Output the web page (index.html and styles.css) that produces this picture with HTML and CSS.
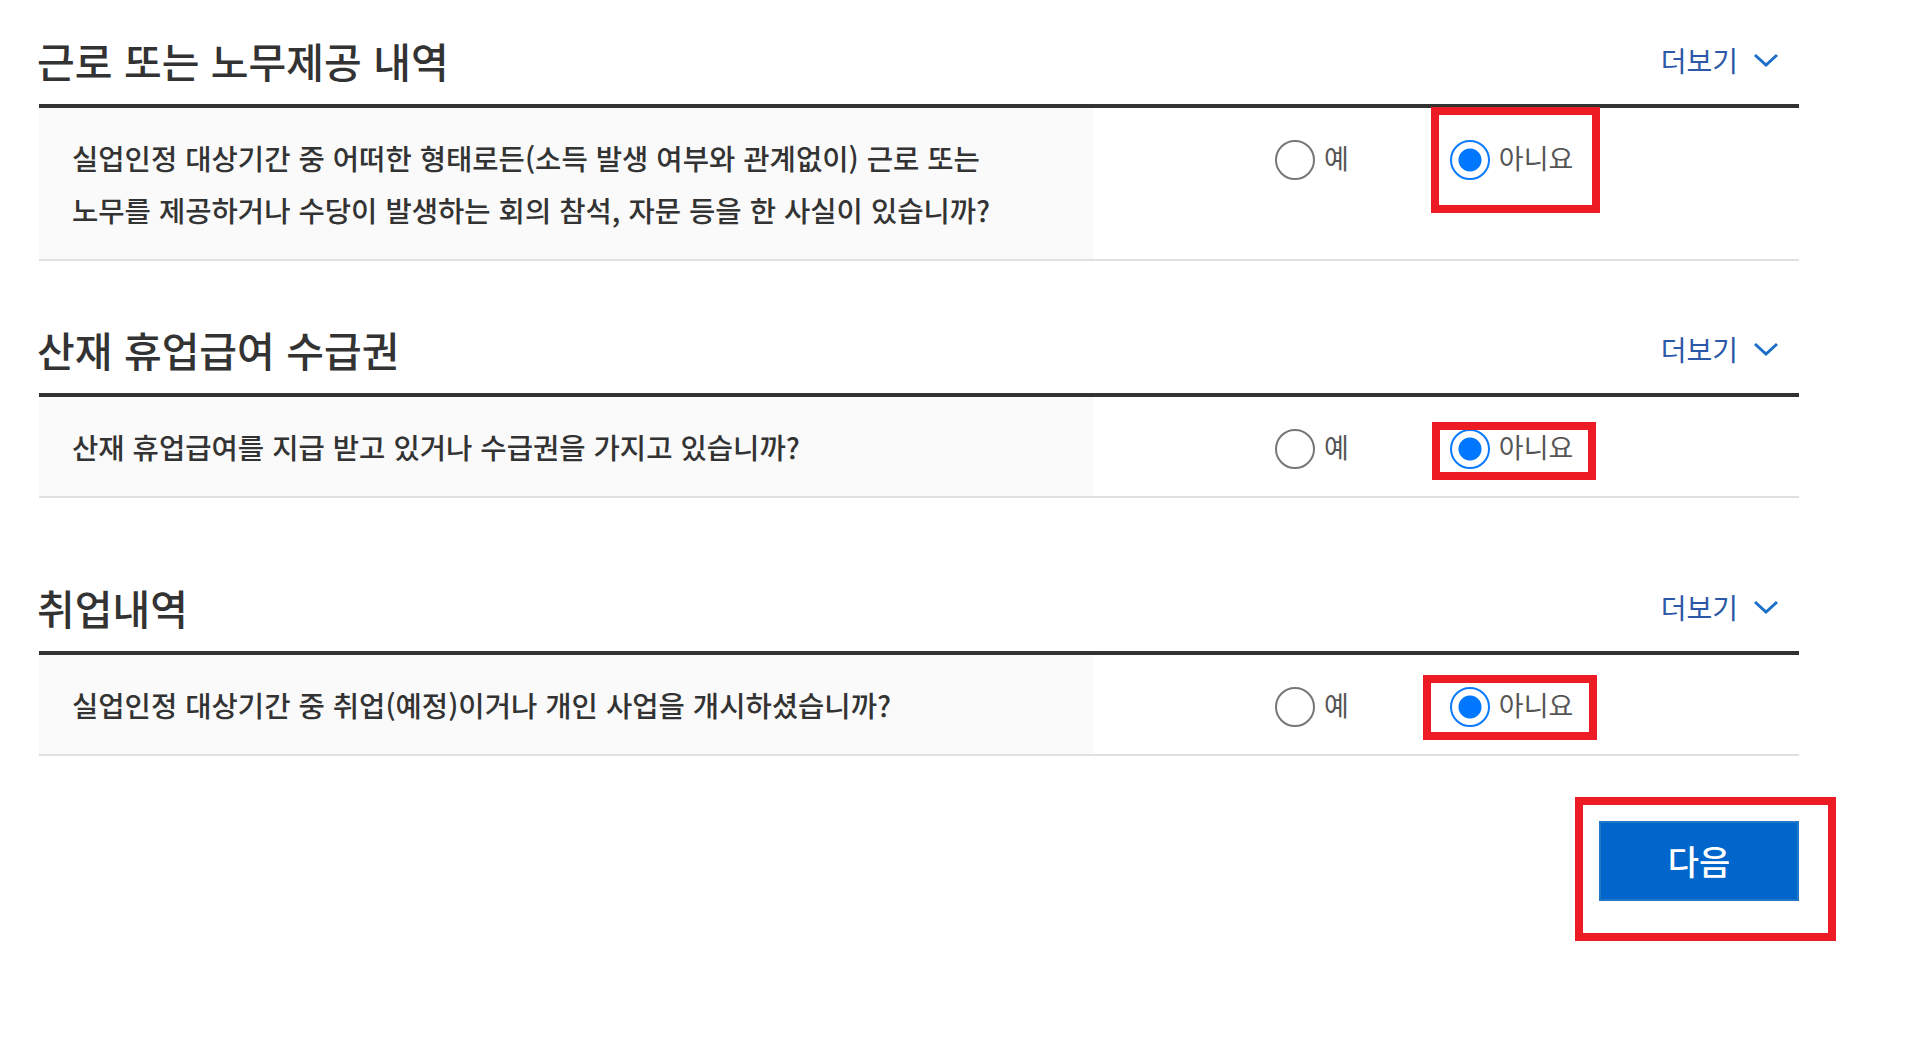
FILE: index.html
```html
<!DOCTYPE html>
<html lang="ko">
<head>
<meta charset="utf-8">
<title>실업인정 신청</title>
<link rel="stylesheet" href="styles.css">
</head>
<body>
<main class="page">
  <section class="sect">
    <div class="sect-head">
      <h2 class="sect-title">근로 또는 노무제공 내역</h2>
      <a class="more" href="#">더보기<svg class="chev" width="26" height="14" viewBox="0 0 26 14"><path d="M2 2 L13 12 L24 2" fill="none" stroke="currentColor" stroke-width="3"/></svg></a>
    </div>
    <div class="qtable">
      <div class="qrow">
        <div class="qtext">실업인정 대상기간 중 어떠한 형태로든(소득 발생 여부와 관계없이) 근로 또는<br>노무를 제공하거나 수당이 발생하는 회의 참석, 자문 등을 한 사실이 있습니까?</div>
        <div class="qopts">
          <label class="opt"><span class="radio"></span><span class="opt-label">예</span></label>
          <label class="opt"><span class="radio is-checked"></span><span class="opt-label">아니요</span></label>
          <span class="mark mark-1"></span>
        </div>
      </div>
    </div>
  </section>

  <section class="sect">
    <div class="sect-head">
      <h2 class="sect-title">산재 휴업급여 수급권</h2>
      <a class="more" href="#">더보기<svg class="chev" width="26" height="14" viewBox="0 0 26 14"><path d="M2 2 L13 12 L24 2" fill="none" stroke="currentColor" stroke-width="3"/></svg></a>
    </div>
    <div class="qtable">
      <div class="qrow">
        <div class="qtext">산재 휴업급여를 지급 받고 있거나 수급권을 가지고 있습니까?</div>
        <div class="qopts">
          <label class="opt"><span class="radio"></span><span class="opt-label">예</span></label>
          <label class="opt"><span class="radio is-checked"></span><span class="opt-label">아니요</span></label>
          <span class="mark mark-2"></span>
        </div>
      </div>
    </div>
  </section>

  <section class="sect sect-last">
    <div class="sect-head">
      <h2 class="sect-title">취업내역</h2>
      <a class="more" href="#">더보기<svg class="chev" width="26" height="14" viewBox="0 0 26 14"><path d="M2 2 L13 12 L24 2" fill="none" stroke="currentColor" stroke-width="3"/></svg></a>
    </div>
    <div class="qtable">
      <div class="qrow">
        <div class="qtext">실업인정 대상기간 중 취업(예정)이거나 개인 사업을 개시하셨습니까?</div>
        <div class="qopts">
          <label class="opt"><span class="radio"></span><span class="opt-label">예</span></label>
          <label class="opt"><span class="radio is-checked"></span><span class="opt-label">아니요</span></label>
          <span class="mark mark-3"></span>
        </div>
      </div>
    </div>
  </section>

  <div class="actions">
    <div class="btn-wrap">
      <button class="btn-next" type="button">다음</button>
      <span class="mark mark-4"></span>
    </div>
  </div>
</main>
</body>
</html>
```

FILE: styles.css
```css
* { box-sizing: border-box; }

html, body {
  margin: 0;
  padding: 0;
  background: #ffffff;
}

body {
  font-family: "Noto Sans CJK KR", "Noto Sans KR", sans-serif;
  color: #333333;
}

.page {
  width: 1799px;
  padding: 30px 0 100px 39px;
}

.sect + .sect {
  margin-top: 58px;
}

.sect.sect-last {
  margin-top: 79px;
}

.sect-head {
  height: 60px;
  margin-bottom: 14px;
  display: flex;
  align-items: center;
  justify-content: space-between;
}

.sect-title {
  margin: 0 0 0 -2px;
  font-size: 41px;
  line-height: 60px;
  font-weight: 500;
  color: #333333;
}

.more {
  display: flex;
  align-items: center;
  gap: 15px;
  margin-right: 20px;
  font-size: 28px;
  line-height: 40px;
  color: #2c58a8;
  text-decoration: none;
}

.chev {
  display: block;
  color: #1c6fc8;
}

.qtable {
  border-top: 4px solid #333333;
}

.qrow {
  display: flex;
  align-items: flex-start;
  border-bottom: 2px solid #e0e0e0;
}

.qtext {
  width: 1055px;
  flex: none;
  align-self: stretch;
  background: #fafafa;
  padding: 24px 20px 23px 33px;
  font-size: 28.6px;
  line-height: 52px;
  font-weight: 500;
  color: #333333;
}

.qopts {
  position: relative;
  flex: 1;
  display: flex;
  gap: 101px;
  padding: 32px 0 0 181px;
}

.opt {
  display: flex;
  align-items: center;
  gap: 9px;
  cursor: pointer;
}

.radio {
  display: block;
  width: 40px;
  height: 40px;
  border-radius: 50%;
  border: 2px solid #777777;
  background: #ffffff;
}

.radio.is-checked {
  border-color: #0a7bff;
  background: radial-gradient(circle, #0077ff 0, #0077ff 11px, #ffffff 12px);
}

.opt-label {
  font-size: 27px;
  line-height: 40px;
  color: #555555;
  position: relative;
  top: -2px;
}

.mark {
  position: absolute;
  border: 8px solid #ed1c24;
  pointer-events: none;
}

.mark-1 { left: 337px; top: -1px; width: 169px; height: 106px; }
.mark-2 { left: 338px; top: 25px; width: 164px; height: 58px; }
.mark-3 { left: 329px; top: 20px; width: 174px; height: 65px; }
.mark-4 { left: -24px; top: -24px; width: 261px; height: 144px; }

.actions {
  display: flex;
  justify-content: flex-end;
  margin-top: 65px;
}

.btn-wrap {
  position: relative;
}

.btn-next {
  display: block;
  width: 200px;
  height: 80px;
  background: #0066cc;
  border: 2px solid #2277c6;
  color: #ffffff;
  font-family: "Noto Sans CJK KR", "Noto Sans KR", sans-serif;
  font-size: 34px;
  font-weight: 500;
  line-height: 1;
  padding: 0;
  cursor: pointer;
}
```
